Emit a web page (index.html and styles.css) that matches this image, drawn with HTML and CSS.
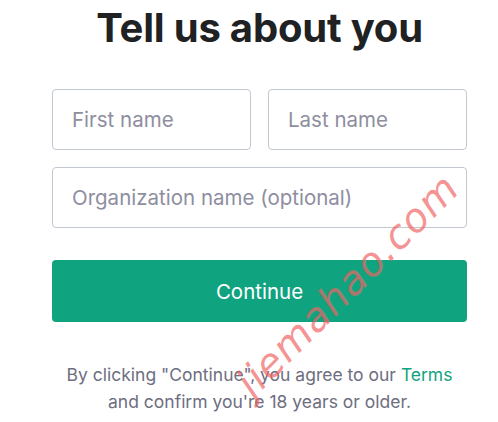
FILE: index.html
```html
<!DOCTYPE html>
<html lang="en">
<head>
<meta charset="utf-8">
<title>Tell us about you</title>
<link rel="stylesheet" href="styles.css">
</head>
<body>
<main class="page">
  <h1 class="title">Tell us about you</h1>
  <form class="form">
    <div class="row">
      <input class="field half" type="text" placeholder="First name">
      <input class="field half" type="text" placeholder="Last name">
    </div>
    <input class="field" type="text" placeholder="Organization name (optional)">
    <button class="continue" type="button">Continue</button>
  </form>
  <p class="legal">By clicking "Continue", you agree to our <a class="link" href="#">Terms</a><br>and confirm you're 18 years or older.</p>
</main>
<div class="watermark">jiemahao.com</div>
</body>
</html>
```
FILE: styles.css
```css
html, body {
  margin: 0;
  padding: 0;
  background: #ffffff;
}
body {
  font-family: Inter, "Noto Sans", sans-serif;
  width: 498px;
  height: 422px;
  overflow: hidden;
  position: relative;
}
.page {
  width: 415px;
  margin-left: 52px;
  display: flex;
  flex-direction: column;
}
.title {
  margin: 4px 0 0;
  font-size: 40px;
  font-weight: 700;
  line-height: 48px;
  text-align: center;
  color: #202123;
  letter-spacing: -0.2px;
}
.form {
  margin-top: 37px;
  display: flex;
  flex-direction: column;
  gap: 17px;
}
.row {
  display: flex;
  gap: 17px;
}
.field {
  box-sizing: border-box;
  width: 100%;
  height: 61px;
  border: 1px solid #c2c8d0;
  border-radius: 4px;
  padding: 0 19px;
  font-family: inherit;
  font-size: 20.5px;
  color: #2d333a;
  outline: none;
}
.half {
  flex: 1 1 0;
  min-width: 0;
}
.field::placeholder {
  color: #8e8ea0;
}
.continue {
  margin-top: 15px;
  height: 62px;
  border: none;
  border-radius: 4px;
  background: #10a37f;
  color: #ffffff;
  font-family: inherit;
  font-size: 20.5px;
}
.legal {
  margin: 39px 0 0;
  text-align: center;
  font-size: 17.5px;
  line-height: 27px;
  color: #6e6e80;
}
.link {
  color: #10a37f;
  text-decoration: none;
}
.watermark {
  position: absolute;
  left: 200px;
  top: 262px;
  transform: rotate(-45deg);
  font-family: "DejaVu Sans", sans-serif;
  font-style: italic;
  font-size: 40px;
  letter-spacing: 1px;
  color: rgba(240, 100, 100, 0.7);
  white-space: nowrap;
}
```
